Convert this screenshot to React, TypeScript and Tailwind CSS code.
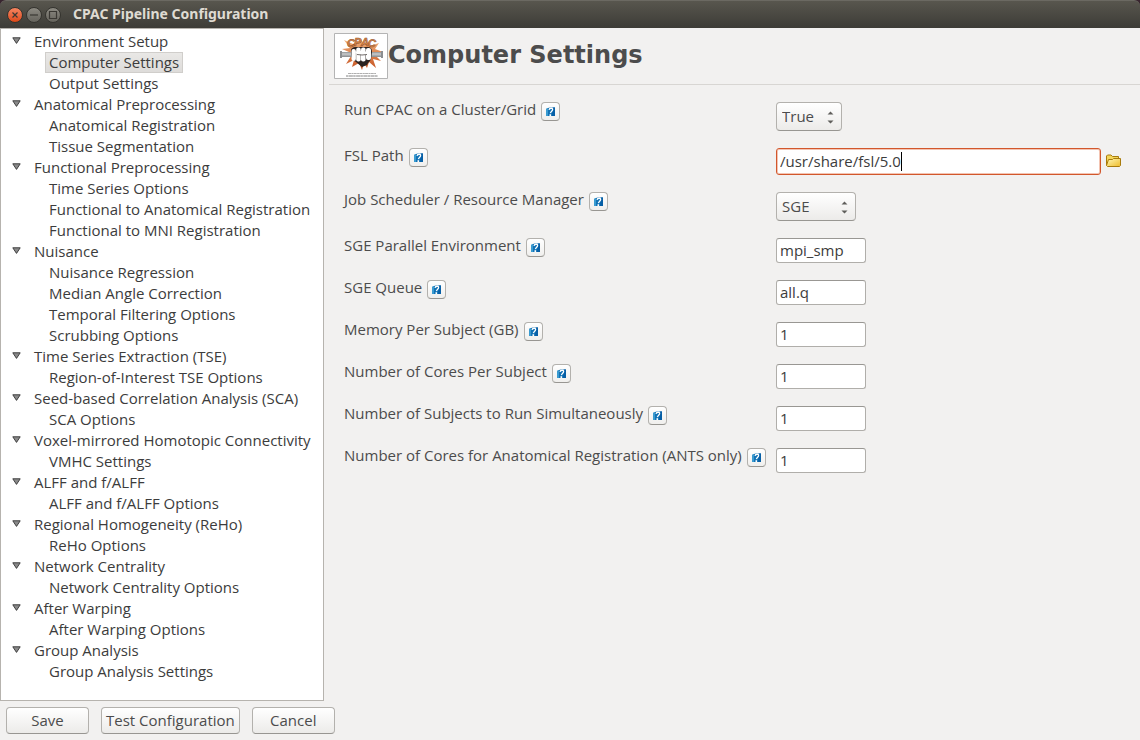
import { useState } from "react";
import type { ReactNode } from "react";

type Section = { title: string; pages: string[] };

const sections: Section[] = [
  { title: "Environment Setup", pages: ["Computer Settings", "Output Settings"] },
  { title: "Anatomical Preprocessing", pages: ["Anatomical Registration", "Tissue Segmentation"] },
  {
    title: "Functional Preprocessing",
    pages: ["Time Series Options", "Functional to Anatomical Registration", "Functional to MNI Registration"],
  },
  {
    title: "Nuisance",
    pages: ["Nuisance Regression", "Median Angle Correction", "Temporal Filtering Options", "Scrubbing Options"],
  },
  { title: "Time Series Extraction (TSE)", pages: ["Region-of-Interest TSE Options"] },
  { title: "Seed-based Correlation Analysis (SCA)", pages: ["SCA Options"] },
  { title: "Voxel-mirrored Homotopic Connectivity", pages: ["VMHC Settings"] },
  { title: "ALFF and f/ALFF", pages: ["ALFF and f/ALFF Options"] },
  { title: "Regional Homogeneity (ReHo)", pages: ["ReHo Options"] },
  { title: "Network Centrality", pages: ["Network Centrality Options"] },
  { title: "After Warping", pages: ["After Warping Options"] },
  { title: "Group Analysis", pages: ["Group Analysis Settings"] },
];

function WindowButton({ label, close, children }: { label: string; close?: boolean; children: ReactNode }) {
  return (
    <button
      type="button"
      aria-label={label}
      className={
        close
          ? "size-4 rounded-full border border-[#35342f] bg-linear-to-b from-[#f58560] to-[#dd4814]"
          : "size-4 rounded-full border border-[#35342f] bg-linear-to-b from-[#8c8a82] to-[#65635c]"
      }
    >
      <svg viewBox="0 0 14 14" className="size-full" fill="none" stroke="#3a3833" strokeWidth="1.2">
        {children}
      </svg>
    </button>
  );
}

function TitleBar() {
  return (
    <div className="bg-[#38252f]">
      <header className="flex h-7 items-center rounded-t-md border-t border-[#6b6962] bg-linear-to-b from-[#58564e] to-[#3d3c37] pl-[7px]">
        <div className="flex gap-[3px]">
          <WindowButton label="Close" close>
            <path d="M4.5 4.5l5 5M9.5 4.5l-5 5" />
          </WindowButton>
          <WindowButton label="Minimize">
            <path d="M3 7h8" />
          </WindowButton>
          <WindowButton label="Maximize">
            <path d="M3.500 3.500h7v7h-7z" />
          </WindowButton>
        </div>
        <h1 className="pb-[2px] pl-3 font-['Noto_Sans',sans-serif] text-sm font-bold text-[#dfdbd2]">
          CPAC Pipeline Configuration
        </h1>
      </header>
    </div>
  );
}

function Tree({ current, onSelect }: { current: string; onSelect: (page: string) => void }) {
  return (
    <nav className="w-[324px] shrink-0 border border-[#b6b3ae] bg-white pt-[2px] text-[#3c3c3c]">
      <ul>
        {sections.map((section) => (
          <li key={section.title}>
            <div className="flex h-[21px] items-center pl-[11px]">
              <svg viewBox="0 0 9 7" className="mb-[2px] h-[7px] w-[9px]">
                <path d="M.8.8h7.400L4.500 6.400z" fill="#8a8a8a" stroke="#3f3f3f" />
              </svg>
              <span className="pl-[13px] leading-[21px] whitespace-nowrap">{section.title}</span>
            </div>
            <ul>
              {section.pages.map((page) => (
                <li key={page} className="flex h-[21px] pl-11">
                  <button
                    type="button"
                    onClick={() => onSelect(page)}
                    className={
                      page === current
                        ? "border border-[#d0cecb] bg-linear-to-b from-[#e9e8e6] to-[#dedcda] px-[3px] leading-[19px] whitespace-nowrap"
                        : "border border-transparent px-[3px] leading-[19px] whitespace-nowrap"
                    }
                  >
                    {page}
                  </button>
                </li>
              ))}
            </ul>
          </li>
        ))}
      </ul>
    </nav>
  );
}

function Logo() {
  return (
    <svg viewBox="0 0 54 46" className="h-[46px] w-[54px] shrink-0" role="img" aria-label="CPAC">
      <defs>
        <linearGradient id="burst" x1="0" y1="0" x2="0" y2="1">
          <stop offset="0" stopColor="#f3b27c" />
          <stop offset="1" stopColor="#c4511f" />
        </linearGradient>
        <linearGradient id="bar" x1="0" y1="0" x2="0" y2="1">
          <stop offset="0" stopColor="#8f9295" />
          <stop offset=".4" stopColor="#c9cbcc" />
          <stop offset="1" stopColor="#85888b" />
        </linearGradient>
      </defs>
      <path d="M.5.5h53v45H.5z" fill="#fff" stroke="#b4b4b4" />
      <path
        d="M27 6l3 6 5-3 1 4 9-3-4 6 8 3-8 3 6 6-8-2 3 9-7-6-2 6-3-5-2 7-3-7-7 4 2-7-8 4 5-8-9 0 7-4-7-3 8-1-6-8 9 4z"
        fill="url(#burst)"
      />
      <path d="M7 19h41v5H7z" fill="url(#bar)" />
      <path d="M6 18h2v7H6zM47 18h2v7h-2z" fill="#8b8e91" />
      <path d="M17 18c0-3 2-4 5-4h11c4 0 5 2 5 5l-1 7c-1 3-3 3-4 6l-5 2-6-5c-3-2-5-4-5-8z" fill="#2a2321" />
      <g fill="#fff">
        <rect x="17.500" y="16" width="4.400" height="12" rx="2" />
        <rect x="22.200" y="14.500" width="4.500" height="14" rx="2" />
        <rect x="27" y="14.500" width="4.600" height="14" rx="2" />
        <rect x="32" y="15" width="5" height="12" rx="2" />
      </g>
      <path d="M21 19c4-2 8-2 12 0v3h-5l-5-1z" fill="#fff" />
      <path d="M23 21.500l5 .5 5-.5" fill="none" stroke="#332b29" strokeWidth=".7" />
      <g
        fill="#dc8a4c"
        stroke="#8a4a24"
        strokeWidth=".5"
        fontFamily="Liberation Sans, sans-serif"
        fontWeight="700"
        fontSize="11"
        fontStyle="italic"
      >
        <text x="13" y="14" transform="rotate(-8 17 10)">C</text>
        <text x="20" y="13">P</text>
        <text x="27" y="13">A</text>
        <text x="34" y="14" transform="rotate(6 38 10)">C</text>
      </g>
      <path d="M14 40.500h28" stroke="#9a9a9a" strokeWidth=".8" strokeDasharray="3 .4 2 .3" />
      <path d="M12 43h32" stroke="#757575" strokeWidth=".9" strokeDasharray="2.500 .4 4 .3" />
    </svg>
  );
}

function HelpButton({ topic }: { topic: string }) {
  return (
    <button
      type="button"
      aria-label={`Help: ${topic}`}
      className="flex size-[19px] shrink-0 items-center justify-center rounded border border-[#b3b1ad] border-b-[#989692] bg-linear-to-b from-white to-[#f0efed]"
    >
      <svg viewBox="0 0 11 11" className="size-[11px]">
        <path d="M1 3l2-1 2-.5h5V10H1z" fill="#1272b5" />
        <path d="M1 3l2-1v8H1z" fill="#3a9bd0" />
        <path d="M8 1.500h2V10H7z" fill="#075fa6" />
        <path
          d="M4 3.800C4.500 1.800 8 1.700 7.600 3.700 7.400 5.200 5.800 5.200 5.400 7.200"
          fill="none"
          stroke="#fff"
          strokeWidth="1.300"
        />
        <path d="M4.500 8.200h1.600V10H4.500z" fill="#fff" />
      </svg>
    </button>
  );
}

function Field({ id, label, children }: { id: string; label: string; children: ReactNode }) {
  return (
    <>
      <div className="flex items-start gap-[5px]">
        <label htmlFor={id} className="leading-[14px] whitespace-nowrap">
          {label}
        </label>
        <HelpButton topic={label} />
      </div>
      {children}
    </>
  );
}

function Dropdown({ id, options, width }: { id: string; options: string[]; width: string }) {
  return (
    <div className={`relative h-[29px] ${width}`}>
      <select
        id={id}
        defaultValue={options[0]}
        className="size-full appearance-none rounded border border-[#b3b1ad] border-b-[#989692] bg-linear-to-b from-white to-[#ecebe9] pb-[2px] pl-[5px] outline-none"
      >
        {options.map((option) => (
          <option key={option}>{option}</option>
        ))}
      </select>
      <svg viewBox="0 0 7 13" className="pointer-events-none absolute top-[9px] right-2 h-[13px] w-[7px]" fill="#5f5e5b">
        <path d="M.5 3.500h6l-3-3zM.5 9.500h6l-3 3z" />
      </svg>
    </div>
  );
}

function SmallInput({ id, value }: { id: string; value: string }) {
  return (
    <input
      id={id}
      type="text"
      defaultValue={value}
      className="h-[25px] w-[90px] rounded-[3px] border border-[#b0aeaa] border-t-[#999793] bg-white px-[3px] pb-[2px] text-[#3c3c3c] outline-none"
    />
  );
}

function FolderIcon() {
  return (
    <svg viewBox="0 0 16 14" className="mb-[2px] h-[14px] w-4">
      <defs>
        <linearGradient id="folder" x1="0" y1="0" x2="1" y2="1">
          <stop offset="0" stopColor="#fff9b8" />
          <stop offset="1" stopColor="#eebb2a" />
        </linearGradient>
      </defs>
      <path d="M.5 11.500V2l1-1H5l1.500 1.500h6V5" fill="#f3d65a" stroke="#a87b0c" />
      <path d="M1.500 12.500L.5 11.500 2.500 5.500h4l1-1h7v7l-1 1z" fill="url(#folder)" stroke="#a87b0c" />
    </svg>
  );
}

const pushButton =
  "h-[27px] min-w-[83px] rounded border border-[#b3b1ad] border-b-[#989692] bg-linear-to-b from-white to-[#ecebe9] px-1 pb-[2px] whitespace-nowrap";

export default function App() {
  const [page, setPage] = useState("Computer Settings");
  return (
    <div className="flex min-h-screen flex-col bg-[#f2f1f0] font-['Open_Sans','Noto_Sans',sans-serif] text-[15px] leading-5 text-[#4c4c4c]">
      <TitleBar />
      <div className="flex flex-1">
        <Tree current={page} onSelect={setPage} />
        <main className="min-w-0 flex-1 pl-[5px]">
          <div className="flex h-[57px] items-start border-b border-[#d8d6d3] pt-[5px] pl-[5px]">
            <Logo />
            <h2 className="font-['DejaVu_Sans',sans-serif] text-2xl leading-[44px] font-bold">{page}</h2>
          </div>
          <form
            className="grid grid-cols-[415px_1fr] items-start gap-[17px] pt-[17px] pr-[18px] pl-[15px]"
            onSubmit={(event) => event.preventDefault()}
          >
            <Field id="cluster" label="Run CPAC on a Cluster/Grid">
              <Dropdown id="cluster" options={["True", "False"]} width="w-[66px]" />
            </Field>
            <Field id="fsl" label="FSL Path">
              <div className="flex items-center gap-[5px]">
                <div className="relative flex-1">
                  <input
                    id="fsl"
                    type="text"
                    defaultValue="/usr/share/fsl/5.0"
                    className="block h-[27px] w-full rounded-[3px] border border-[#d2572c] bg-white px-[3px] pb-[2px] text-[#3c3c3c] ring-1 ring-[#f3c4b2] outline-none ring-inset"
                  />
                  <span className="absolute top-1 left-[125px] h-[19px] w-px bg-black" />
                </div>
                <button type="button" aria-label="Browse for FSL path">
                  <FolderIcon />
                </button>
              </div>
            </Field>
            <Field id="scheduler" label="Job Scheduler / Resource Manager">
              <Dropdown id="scheduler" options={["SGE", "PBS"]} width="w-[80px]" />
            </Field>
            <Field id="environment" label="SGE Parallel Environment">
              <SmallInput id="environment" value="mpi_smp" />
            </Field>
            <Field id="queue" label="SGE Queue">
              <SmallInput id="queue" value="all.q" />
            </Field>
            <Field id="memory" label="Memory Per Subject (GB)">
              <SmallInput id="memory" value="1" />
            </Field>
            <Field id="cores" label="Number of Cores Per Subject">
              <SmallInput id="cores" value="1" />
            </Field>
            <Field id="subjects" label="Number of Subjects to Run Simultaneously">
              <SmallInput id="subjects" value="1" />
            </Field>
            <Field id="ants" label="Number of Cores for Anatomical Registration (ANTS only)">
              <SmallInput id="ants" value="1" />
            </Field>
          </form>
        </main>
      </div>
      <footer className="flex gap-3 px-[6px] py-[6px]">
        <button type="button" className={pushButton}>
          Save
        </button>
        <button type="button" className={pushButton}>
          Test Configuration
        </button>
        <button type="button" className={pushButton}>
          Cancel
        </button>
      </footer>
    </div>
  );
}
